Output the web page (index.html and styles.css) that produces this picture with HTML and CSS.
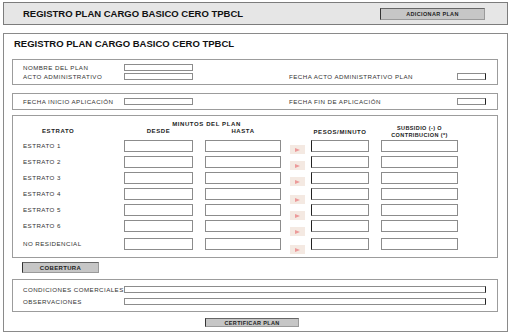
FILE: index.html
```html
<!DOCTYPE html>
<html lang="es">
<head>
<meta charset="UTF-8">
<title>Registro Plan Cargo Basico Cero TPBCL</title>
<link rel="stylesheet" href="styles.css">
</head>
<body>
<div class="topbar">
  <span class="title">REGISTRO PLAN CARGO BASICO CERO TPBCL</span>
  <span class="btn btn-add">ADICIONAR PLAN</span>
</div>

<div class="panel">
  <div class="panel-title">REGISTRO PLAN CARGO BASICO CERO TPBCL</div>

  <div class="box box-plan">
    <div class="line">
      <span class="label">NOMBRE DEL PLAN</span>
      <span class="field field-md"></span>
    </div>
    <div class="line">
      <span class="label">ACTO ADMINISTRATIVO</span>
      <span class="field field-md"></span>
      <span class="label label2">FECHA ACTO ADMINISTRATIVO PLAN</span>
      <span class="field field-sm"></span>
    </div>
  </div>

  <div class="box box-fechas">
    <div class="line">
      <span class="label">FECHA INICIO APLICACIÓN</span>
      <span class="field field-md"></span>
      <span class="label label2">FECHA FIN DE APLICACIÓN</span>
      <span class="field field-sm"></span>
    </div>
  </div>

  <div class="box box-tabla">
    <div class="thead">
      <span class="th th-min">MINUTOS DEL PLAN</span>
      <span class="th th-estrato">ESTRATO</span>
      <span class="th th-desde w-desde">DESDE</span>
      <span class="th th-hasta w-hasta">HASTA</span>
      <span class="th th-pesos w-pesos">PESOS/MINUTO</span>
      <span class="th th-sub w-sub">SUBSIDIO (-) O<br>CONTRIBUCION (*)</span>
    </div>

    <div class="trow">
      <span class="label">ESTRATO 1</span>
      <span class="cell w-desde"></span><span class="cell w-hasta"></span>
      <span class="arrow"></span>
      <span class="cell cell-pesos w-pesos"></span><span class="cell w-sub"></span>
    </div>
    <div class="trow">
      <span class="label">ESTRATO 2</span>
      <span class="cell w-desde"></span><span class="cell w-hasta"></span>
      <span class="arrow"></span>
      <span class="cell cell-pesos w-pesos"></span><span class="cell w-sub"></span>
    </div>
    <div class="trow">
      <span class="label">ESTRATO 3</span>
      <span class="cell w-desde"></span><span class="cell w-hasta"></span>
      <span class="arrow"></span>
      <span class="cell cell-pesos w-pesos"></span><span class="cell w-sub"></span>
    </div>
    <div class="trow">
      <span class="label">ESTRATO 4</span>
      <span class="cell w-desde"></span><span class="cell w-hasta"></span>
      <span class="arrow low"></span>
      <span class="cell cell-pesos w-pesos"></span><span class="cell w-sub"></span>
    </div>
    <div class="trow">
      <span class="label">ESTRATO 5</span>
      <span class="cell w-desde"></span><span class="cell w-hasta"></span>
      <span class="arrow low"></span>
      <span class="cell cell-pesos w-pesos"></span><span class="cell w-sub"></span>
    </div>
    <div class="trow">
      <span class="label">ESTRATO 6</span>
      <span class="cell w-desde"></span><span class="cell w-hasta"></span>
      <span class="arrow low"></span>
      <span class="cell cell-pesos w-pesos"></span><span class="cell w-sub"></span>
    </div>
    <div class="trow trow-last">
      <span class="label">NO RESIDENCIAL</span>
      <span class="cell w-desde"></span><span class="cell w-hasta"></span>
      <span class="arrow low"></span>
      <span class="cell cell-pesos w-pesos"></span><span class="cell w-sub"></span>
    </div>
  </div>

  <span class="btn btn-cobertura">COBERTURA</span>

  <div class="box box-notas">
    <div class="line">
      <span class="label">CONDICIONES COMERCIALES</span>
      <span class="field field-lg"></span>
    </div>
    <div class="line">
      <span class="label">OBSERVACIONES</span>
      <span class="field field-lg"></span>
    </div>
  </div>

  <span class="btn btn-certificar">CERTIFICAR PLAN</span>
</div>
</body>
</html>
```

FILE: styles.css
```css
body {
  margin: 0;
  padding: 2px 0 0 3px;
  font-family: "Liberation Sans", Arial, sans-serif;
  background-color: #fff;
  color: #222;
}

.topbar {
  box-sizing: border-box;
  width: 505px;
  height: 23px;
  padding: 0 22px 0 19px;
  display: flex;
  align-items: center;
  justify-content: space-between;
  background-color: #e6e6e6;
  border: 1px solid #7c7c7c;
}

.title,
.panel-title {
  font-size: 9.5px;
  font-weight: bold;
  color: #111;
}

.btn {
  box-sizing: border-box;
  display: flex;
  justify-content: center;
  align-items: center;
  font-size: 5.5px;
  font-weight: bold;
  letter-spacing: 0.35px;
  color: #222;
  background-color: #c6c6c6;
  border: 1px solid #9a9a9a;
  border-left-color: #333;
  border-top-color: #666;
}

.btn-add {
  width: 105px;
  height: 12px;
  margin-top: 1px;
}

.panel {
  box-sizing: border-box;
  width: 505px;
  height: 299px;
  margin-top: 8px;
  padding: 4px 9px 0 8px;
  border: 1px solid #8a8a8a;
  display: flex;
  flex-direction: column;
}

.panel-title {
  line-height: 12px;
  margin-left: 2px;
  margin-bottom: 9px;
}

.box {
  border: 1px solid #9c9c9c;
  padding-left: 10px;
}

.box-plan {
  padding-top: 4px;
  padding-bottom: 4px;
}

.box-plan .line + .line {
  margin-top: 2px;
}

.box-fechas {
  margin-top: 8px;
  padding-top: 4px;
  padding-bottom: 4px;
}

.line {
  display: flex;
  align-items: center;
  height: 7px;
}

.label {
  width: 101px;
  font-size: 6.2px;
  letter-spacing: 0.45px;
  white-space: nowrap;
  color: #333;
}

.label2 {
  width: 168px;
  margin-left: 96px;
}

.field {
  box-sizing: border-box;
  height: 7px;
  border: 1px solid #8c8c8c;
  border-right-color: #222;
}

.field-md {
  width: 69px;
  border-right-color: #8c8c8c;
}

.field-sm {
  width: 29px;
}

.field-lg {
  width: 362px;
}

/* tabla de estratos */
.box-tabla {
  margin-top: 5px;
  padding-top: 5px;
  padding-bottom: 7px;
}

.thead,
.trow {
  display: grid;
  grid-template-columns: 101px 81px 84px 22px 70px 77px;
}

.thead {
  grid-template-rows: 7px 7px;
}

.th {
  font-size: 6px;
  font-weight: bold;
  letter-spacing: 0.6px;
  line-height: 7px;
  color: #222;
  text-align: center;
  white-space: nowrap;
}

.th-min {
  grid-column: 2 / 4;
  grid-row: 1;
}

.th-estrato {
  grid-column: 1;
  grid-row: 2;
  text-align: left;
  padding-left: 19px;
}

.th-desde {
  grid-column: 2;
  grid-row: 2;
}

.th-hasta {
  grid-column: 3;
  grid-row: 2;
}

.th-pesos {
  grid-column: 5;
  grid-row: 2;
  padding-top: 1px;
}

.th-sub {
  grid-column: 6;
  grid-row: 1 / 3;
  padding-top: 4px;
  font-size: 5.5px;
  letter-spacing: 0.4px;
}

.trow {
  grid-template-rows: 12px;
  margin-top: 4px;
  align-items: start;
}

.thead + .trow {
  margin-top: 5px;
}

.trow-last {
  margin-top: 6px;
}

.trow .label {
  line-height: 12px;
}

.cell {
  box-sizing: border-box;
  height: 12px;
  border: 1px solid #8c8c8c;
}

.cell-pesos {
  border-left-color: #222;
}

.w-desde { width: 69px; }
.w-hasta { width: 76px; }
.w-pesos { width: 58px; }
.w-sub { width: 77px; }

.arrow {
  width: 15px;
  height: 9px;
  margin: 5px 0 0 1px;
  background-color: #f4e9e2;
  display: flex;
  justify-content: center;
  align-items: center;
}

.arrow.low {
  margin-top: 7px;
}

.arrow::after {
  content: "";
  border-left: 5px solid #ec9a9a;
  border-top: 2px solid transparent;
  border-bottom: 2px solid transparent;
}

.btn-cobertura {
  width: 77px;
  height: 11px;
  margin: 4px 0 0 10px;
  font-size: 6px;
}

.box-notas {
  margin-top: 6px;
  padding-top: 6px;
  padding-bottom: 6px;
}

.box-notas .line + .line {
  margin-top: 5px;
}

.btn-certificar {
  width: 94px;
  height: 9px;
  margin: 6px 0 0 193px;
  font-size: 5.5px;
}
```
